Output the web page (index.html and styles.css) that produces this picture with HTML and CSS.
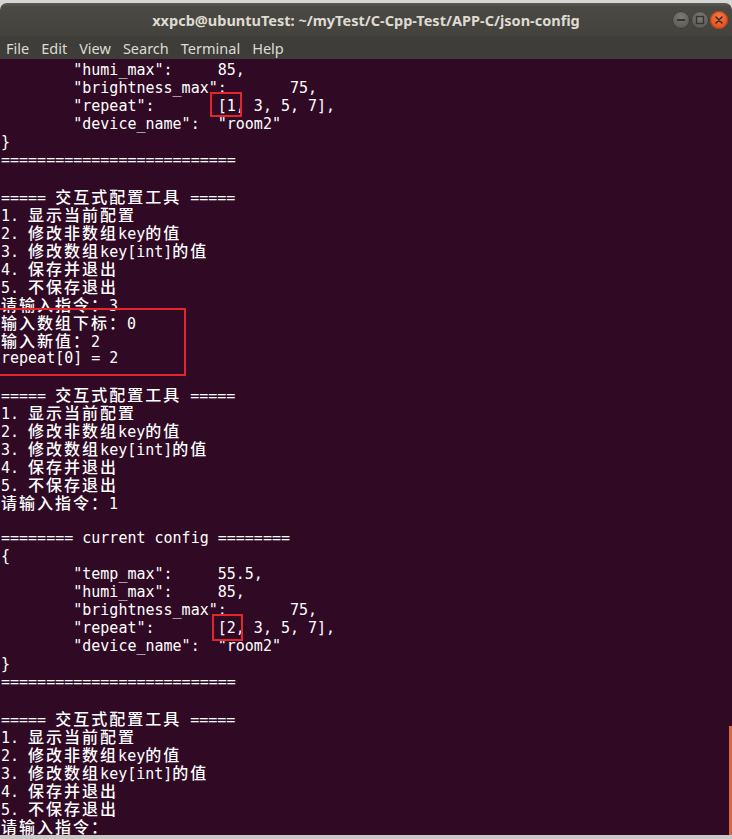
FILE: index.html
```html
<!DOCTYPE html>
<html lang="zh">
<head>
<meta charset="utf-8">
<title>json-config</title>
<link rel="stylesheet" href="styles.css">
</head>
<body>
<div class="window">
  <div class="titlebar">
    <span class="title">xxpcb@ubuntuTest: ~/myTest/C-Cpp-Test/APP-C/json-config</span>
    <div class="wbtns">
      <span class="wbtn gray"><svg width="18" height="18" viewBox="0 0 18 18"><rect x="5" y="8" width="8" height="2" fill="#35342f"/></svg></span>
      <span class="wbtn gray"><svg width="18" height="18" viewBox="0 0 18 18"><rect x="5.5" y="5.5" width="7" height="7" fill="none" stroke="#35342f" stroke-width="1.4"/></svg></span>
      <span class="wbtn close"><svg width="18" height="18" viewBox="0 0 18 18"><path d="M6 6 L12 12 M12 6 L6 12" stroke="#3a2a22" stroke-width="1.6" stroke-linecap="round"/></svg></span>
    </div>
  </div>
  <div class="menubar">
    <span class="mi">File</span><span class="mi">Edit</span><span class="mi">View</span><span class="mi">Search</span><span class="mi">Terminal</span><span class="mi">Help</span>
  </div>
  <div class="term">
    <div class="ln">        "humi_max":     85,</div>
    <div class="ln">        "brightness_max":       75,</div>
    <div class="ln">        "repeat":       [1, 3, 5, 7],</div>
    <div class="ln">        "device_name":  "room2"</div>
    <div class="ln">}</div>
    <div class="ln">==========================</div>
    <div class="ln"></div>
    <div class="ln">===== <span class="c">交互式配置工具</span> =====</div>
    <div class="ln">1. <span class="c">显示当前配置</span></div>
    <div class="ln">2. <span class="c">修改非数组</span>key<span class="c">的值</span></div>
    <div class="ln">3. <span class="c">修改数组</span>key[int]<span class="c">的值</span></div>
    <div class="ln">4. <span class="c">保存并退出</span></div>
    <div class="ln">5. <span class="c">不保存退出</span></div>
    <div class="ln"><span class="c">请输入指令：</span>3</div>
    <div class="ln"><span class="c">输入数组下标：</span>0</div>
    <div class="ln"><span class="c">输入新值：</span>2</div>
    <div class="ln">repeat[0] = 2</div>
    <div class="ln"></div>
    <div class="ln">===== <span class="c">交互式配置工具</span> =====</div>
    <div class="ln">1. <span class="c">显示当前配置</span></div>
    <div class="ln">2. <span class="c">修改非数组</span>key<span class="c">的值</span></div>
    <div class="ln">3. <span class="c">修改数组</span>key[int]<span class="c">的值</span></div>
    <div class="ln">4. <span class="c">保存并退出</span></div>
    <div class="ln">5. <span class="c">不保存退出</span></div>
    <div class="ln"><span class="c">请输入指令：</span>1</div>
    <div class="ln"></div>
    <div class="ln">======== current config ========</div>
    <div class="ln">{</div>
    <div class="ln">        "temp_max":     55.5,</div>
    <div class="ln">        "humi_max":     85,</div>
    <div class="ln">        "brightness_max":       75,</div>
    <div class="ln">        "repeat":       [2, 3, 5, 7],</div>
    <div class="ln">        "device_name":  "room2"</div>
    <div class="ln">}</div>
    <div class="ln">==========================</div>
    <div class="ln"></div>
    <div class="ln">===== <span class="c">交互式配置工具</span> =====</div>
    <div class="ln">1. <span class="c">显示当前配置</span></div>
    <div class="ln">2. <span class="c">修改非数组</span>key<span class="c">的值</span></div>
    <div class="ln">3. <span class="c">修改数组</span>key[int]<span class="c">的值</span></div>
    <div class="ln">4. <span class="c">保存并退出</span></div>
    <div class="ln">5. <span class="c">不保存退出</span></div>
    <div class="ln"><span class="c">请输入指令：</span></div>
    <span class="mark m1"></span>
    <span class="mark m2"></span>
    <span class="mark m3"></span>
    <span class="thumb"></span>
  </div>
  <div class="bottom"></div>
</div>
</body>
</html>
```
FILE: styles.css
```css
html, body {
  margin: 0;
  padding: 0;
}
body {
  width: 732px;
  height: 839px;
  overflow: hidden;
  background: #d6d6d4;
}
.window {
  margin-top: 3px;
  height: 836px;
  display: flex;
  flex-direction: column;
}
.titlebar {
  position: relative;
  height: 33px;
  flex: none;
  border-radius: 7px 7px 0 0;
  background: linear-gradient(#5b5a55 0px, #4a4944 4px, #43423d 100%);
  display: flex;
  align-items: center;
  justify-content: center;
}
.title {
  color: #dfdbd2;
  font-family: "Noto Sans", "DejaVu Sans", sans-serif;
  font-weight: bold;
  font-size: 14.5px;
  padding-top: 1px;
}
.wbtns {
  position: absolute;
  right: 4px;
  top: 8px;
  display: flex;
  gap: 1px;
}
.wbtn {
  width: 18px;
  height: 18px;
  border-radius: 50%;
  display: flex;
  box-sizing: border-box;
}
.wbtn.gray {
  background: radial-gradient(circle at 50% 35%, #7c7b76, #5c5b56 70%);
  box-shadow: inset 0 0 0 1px #3b3a36;
}
.wbtn.close {
  background: radial-gradient(circle at 50% 35%, #f57a45, #e4521e 70%);
  box-shadow: inset 0 0 0 1px #a9421b;
}
.menubar {
  height: 23px;
  flex: none;
  background: #3e3d39;
  display: flex;
  align-items: center;
  padding-left: 6px;
  gap: 12px;
  color: #dfdbd2;
  font-family: "Noto Sans", "DejaVu Sans", sans-serif;
  font-size: 14.5px;
}
.term {
  position: relative;
  flex: 1;
  background: #300a24;
  color: #ffffff;
  font-family: "DejaVu Sans Mono", monospace;
  font-size: 15px;
  padding: 2px 0 0 1px;
  overflow: hidden;
}
.ln {
  height: 18px;
  line-height: 18px;
  white-space: pre;
}
.c {
  font-family: "Noto Sans CJK SC", sans-serif;
  font-size: 16px;
  font-weight: 500;
  letter-spacing: 2px;
}
.mark {
  position: absolute;
  box-sizing: border-box;
  border: 2px solid #e3262b;
}
.m1 { left: 210px; top: 33px; width: 32px; height: 25px; }
.m2 { left: -2px; top: 249px; width: 188px; height: 68px; }
.m3 { left: 212px; top: 555px; width: 31px; height: 27px; }
.thumb {
  position: absolute;
  right: 0;
  top: 667px;
  width: 3px;
  height: 109px;
  background: #d8683f;
}
.bottom {
  height: 4px;
  flex: none;
  background: #c8c8c4;
}
```
